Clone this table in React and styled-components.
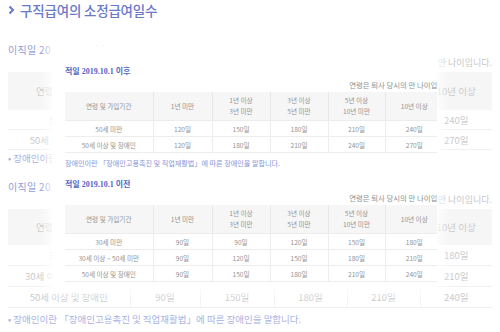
import React from "react";
import styled, { createGlobalStyle } from "styled-components";

const Global = createGlobalStyle`
  html, body { margin: 0; padding: 0; background: #fff; }
  body { font-family: "Noto Sans CJK KR", "Noto Sans", sans-serif; }
`;

const Page = styled.div`
  position: relative;
  width: 500px;
  height: 332px;
  overflow: hidden;
  padding: 0 8px;
  box-sizing: border-box;
  background: #fff;
`;

const Title = styled.h2`
  margin: 0;
  height: 20px;
  display: flex;
  align-items: center;
  gap: 5px;
  font-size: 13.5px;
  font-weight: 500;
  color: #6a78c8;
  letter-spacing: -0.2px;
`;

const Section = styled.section`
  margin-top: ${(p) => p.$top}px;
`;

const DateLabel = styled.div`
  height: 14px;
  line-height: 14px;
  font-size: 10px;
  color: #8f9dda;
  letter-spacing: 0.3px;
`;

const Note = styled.div`
  width: 484px;
  height: 12px;
  line-height: 12px;
  font-size: 9px;
  text-align: right;
  color: #c8c8c8;
`;

const BgTable = styled.table`
  width: 484px;
  margin-top: 3px;
  border-collapse: collapse;
  table-layout: fixed;
  font-size: 9.5px;
  color: #cbcbcb;
  th {
    height: ${(p) => p.$headH}px;
    background: #f6f6f6;
    font-weight: 400;
    padding: 0;
    border-right: 1px solid #f1f1f1;
  }
  td {
    height: ${(p) => p.$rowH - 1}px;
    padding: 0;
    text-align: center;
    border-bottom: 1px solid #f0f0f0;
    border-right: 1px solid #f3f3f3;
  }
  th:last-child, td:last-child { border-right: none; }
`;

const Footnote = styled.div`
  margin-top: ${(p) => p.$top}px;
  height: 14px;
  line-height: 14px;
  font-size: 9.5px;
  color: #a8b3e3;
  white-space: nowrap;
`;

const Overlay = styled.div`
  position: absolute;
  left: 52px;
  top: 46px;
  width: 385px;
  height: 242px;
  padding: 20px 0 0 13px;
  box-sizing: border-box;
  background: #fff;
  overflow: hidden;
  box-shadow: 0 0 9px 5px rgba(255, 255, 255, 0.85);
`;

const SmallDate = styled.div`
  margin-top: ${(p) => p.$top}px;
  height: 12px;
  line-height: 12px;
  font-family: "Liberation Serif", "Noto Sans CJK KR", serif;
  font-size: 8px;
  font-weight: 700;
  color: #5265c4;
  white-space: nowrap;
`;

const SmallNote = styled.div`
  width: 388px;
  margin-top: 2px;
  height: 10px;
  line-height: 10px;
  font-size: 7.4px;
  color: #8f8f8f;
  text-align: right;
  white-space: nowrap;
`;

const SmallTable = styled.table`
  width: 378px;
  margin-top: 2px;
  border-collapse: collapse;
  table-layout: fixed;
  font-size: 6.6px;
  color: #939393;
  th {
    height: 28px;
    padding: 0;
    background: #f6f6f6;
    font-weight: 400;
    line-height: 11px;
    border-right: 1px solid #e8e8e8;
    border-bottom: 1px solid #ececec;
  }
  td {
    height: 15px;
    padding: 0;
    text-align: center;
    border-bottom: 1px solid #ededed;
    border-right: 1px solid #ededed;
  }
  th:last-child, td:last-child { border-right: none; }
`;

const SmallFoot = styled.div`
  margin-top: 4px;
  height: 12px;
  line-height: 12px;
  font-size: 7.1px;
  color: #8494d8;
  white-space: nowrap;
`;

const headers = ["연령 및 가입기간", "1년 미만", ["1년 이상", "3년 미만"], ["3년 이상", "5년 미만"], ["5년 이상", "10년 미만"], "10년 이상"];

const after = [
  ["50세 미만", "120일", "150일", "180일", "210일", "240일"],
  ["50세 이상 및 장애인", "120일", "180일", "210일", "240일", "270일"],
];
const before = [
  ["30세 미만", "90일", "90일", "120일", "150일", "180일"],
  ["30세 이상 ~ 50세 미만", "90일", "120일", "150일", "180일", "210일"],
  ["50세 이상 및 장애인", "90일", "150일", "180일", "210일", "240일"],
];

const bgCols = [122, 70, 74, 73, 73, 72];
const smCols = [88, 59, 58, 58, 57, 58];

function Head() {
  return (
    <tr>
      {headers.map((h, i) => (
        <th key={i}>{Array.isArray(h) ? (<>{h[0]}<br />{h[1]}</>) : h}</th>
      ))}
    </tr>
  );
}

function Body({ rows }) {
  return rows.map((r, i) => (
    <tr key={i}>
      {r.map((c, j) => (
        <td key={j}>{c}</td>
      ))}
    </tr>
  ));
}

function Cols({ widths }) {
  return (
    <colgroup>
      {widths.map((w, i) => (
        <col key={i} style={{ width: w }} />
      ))}
    </colgroup>
  );
}

const FOOT = "장애인이란 「장애인고용촉진 및 직업재활법」에 따른 장애인을 말합니다.";
const NOTE = "연령은 퇴사 당시의 만 나이입니다.";

export default function App() {
  return (
    <>
      <Global />
      <Page>
        <Title>
          <svg width="7" height="10" viewBox="0 0 7 10">
            <polyline points="1.5,1.5 5,5 1.5,8.5" fill="none" stroke="#6a78c8" strokeWidth="2" />
          </svg>
          구직급여의 소정급여일수
        </Title>

        <Section $top={23}>
          <DateLabel>이직일 2019.10.1 이후</DateLabel>
          <Note>{NOTE}</Note>
          <BgTable $headH={38} $rowH={20}>
            <Cols widths={bgCols} />
            <thead><Head /></thead>
            <tbody><Body rows={after} /></tbody>
          </BgTable>
          <Footnote $top={1}>• {FOOT}</Footnote>
        </Section>

        <Section $top={15}>
          <DateLabel>이직일 2019.10.1 이전</DateLabel>
          <Note>{NOTE}</Note>
          <BgTable $headH={36} $rowH={21}>
            <Cols widths={bgCols} />
            <thead><Head /></thead>
            <tbody><Body rows={before} /></tbody>
          </BgTable>
          <Footnote $top={4}>• {FOOT}</Footnote>
        </Section>

        <Overlay>
          <SmallDate $top={0}>적일 2019.10.1 이후</SmallDate>
          <SmallNote>{NOTE}</SmallNote>
          <SmallTable>
            <Cols widths={smCols} />
            <thead><Head /></thead>
            <tbody><Body rows={after} /></tbody>
          </SmallTable>
          <SmallFoot>{FOOT}</SmallFoot>
          <SmallDate $top={10}>적일 2019.10.1 이전</SmallDate>
          <SmallNote>{NOTE}</SmallNote>
          <SmallTable>
            <Cols widths={smCols} />
            <thead><Head /></thead>
            <tbody><Body rows={before} /></tbody>
          </SmallTable>
        </Overlay>
      </Page>
    </>
  );
}
